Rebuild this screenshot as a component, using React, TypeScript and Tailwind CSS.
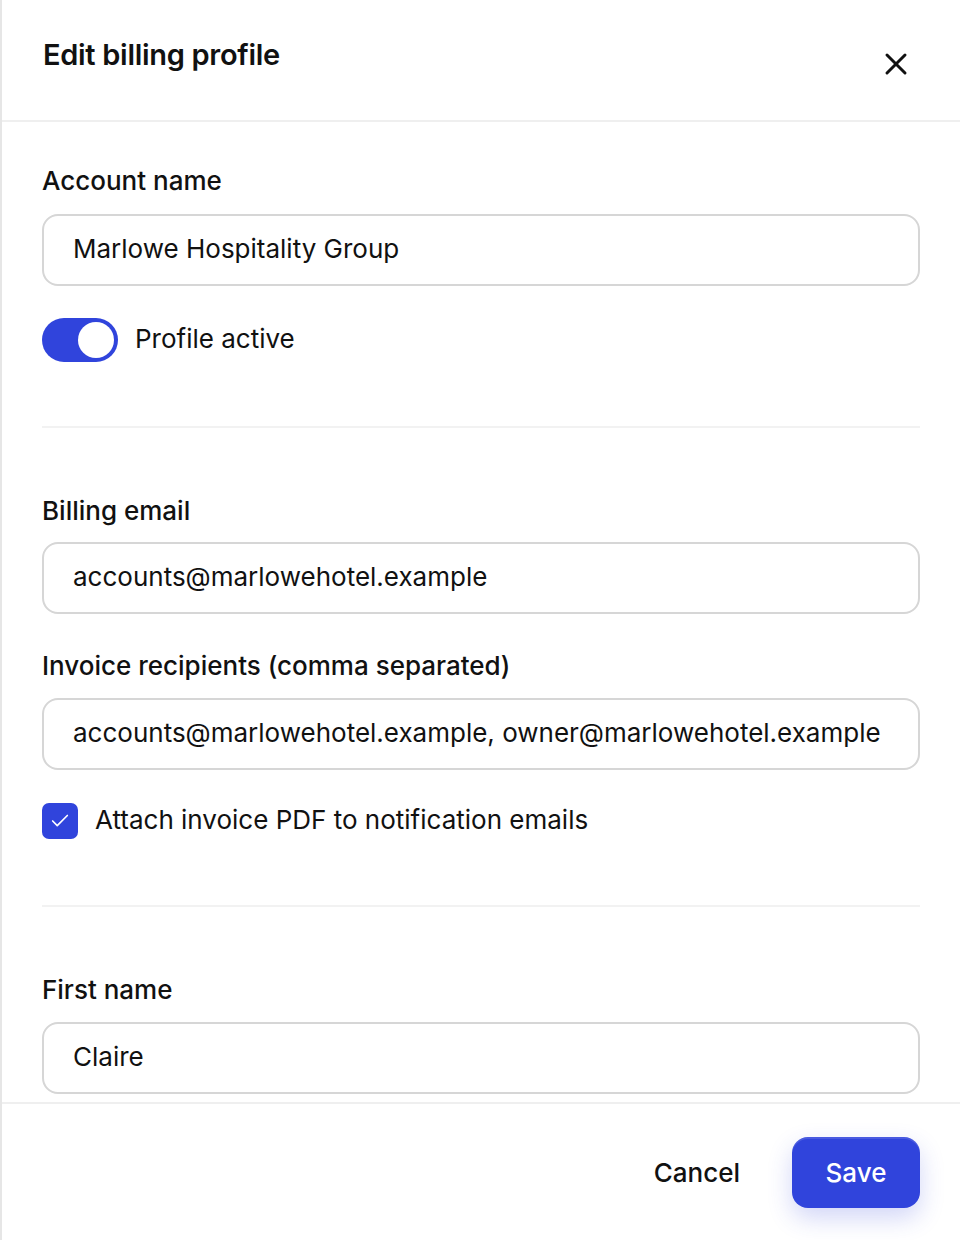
import { X, Check } from "lucide-react";

const labelCls = "block text-[26px] leading-[32px] font-medium text-[#111]";
const inputCls =
  "flex h-[72px] w-full items-center rounded-[16px] border-2 border-[#d6d6d6] px-[29px] pb-[3px] text-[26px] text-[#111]";

function Field({ label, value, gap = "mt-[16px]" }: { label: string; value: string; gap?: string }) {
  return (
    <div>
      <span className={labelCls}>{label}</span>
      <div className={`${inputCls} ${gap}`}>
        <span className="truncate">{value}</span>
      </div>
    </div>
  );
}

export default function App() {
  return (
    <div
      className="flex h-[1240px] w-[960px] flex-col border-l-2 border-[#e6e6e6] bg-white text-[#111]"
      style={{ fontFamily: "Inter, 'Liberation Sans', sans-serif" }}
    >
      {/* header */}
      <header className="flex h-[122px] shrink-0 items-start justify-between border-b-2 border-[#efefef] pl-[41px] pr-[46px]">
        <h1 className="mt-[37px] text-[29px] leading-[36px] font-semibold tracking-[-0.3px]">
          Edit billing profile
        </h1>
        <button className="mt-[46px] text-[#111]">
          <X size={36} strokeWidth={2} />
        </button>
      </header>

      {/* body */}
      <div className="flex-1 overflow-hidden px-[40px]">
        <section className="pt-[43px] pb-[64px]">
          <Field label="Account name" value="Marlowe Hospitality Group" gap="mt-[17px]" />
          <div className="mt-[32px] flex items-center gap-[17px]">
            <div className="flex h-[44px] w-[76px] items-center justify-end rounded-full bg-[#3044dc] pr-[4px]">
              <div className="h-[36px] w-[36px] rounded-full bg-white" />
            </div>
            <span className="pb-[2px] text-[26px] leading-[32px]">Profile active</span>
          </div>
        </section>
        <div className="h-[2px] bg-[#f2f2f2]" />

        <section className="pt-[67px] pb-[66px]">
          <Field label="Billing email" value="accounts@marlowehotel.example" gap="mt-[15px]" />
          <div className="mt-[36px]">
            <Field
              label="Invoice recipients (comma separated)"
              value="accounts@marlowehotel.example, owner@marlowehotel.example"
            />
          </div>
          <div className="mt-[33px] flex items-center gap-[17px]">
            <div className="flex h-[36px] w-[36px] items-center justify-center rounded-[7px] bg-[#3044dc] text-white">
              <Check size={22} strokeWidth={1.8} />
            </div>
            <span className="pb-[2px] text-[26px] leading-[32px]">
              Attach invoice PDF to notification emails
            </span>
          </div>
        </section>
        <div className="h-[2px] bg-[#f2f2f2]" />

        <section className="pt-[67px] pb-[40px]">
          <Field label="First name" value="Claire" />
        </section>
      </div>

      {/* footer */}
      <footer className="flex h-[138px] shrink-0 items-center justify-end gap-[52px] border-t-2 border-[#efefef] pr-[40px]">
        <button className="text-[26px] font-medium">Cancel</button>
        <button className="h-[71px] w-[128px] rounded-[16px] bg-[#3044dc] text-[26px] font-medium text-white shadow-[0_10px_24px_rgba(48,68,220,0.22),inset_0_2px_0_rgba(255,255,255,0.12)]">
          Save
        </button>
      </footer>
    </div>
  );
}
